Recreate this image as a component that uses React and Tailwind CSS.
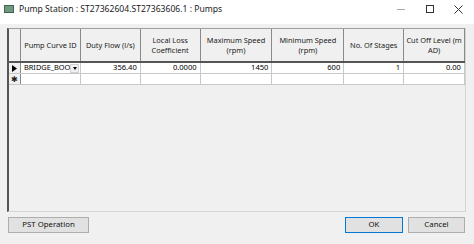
import React from 'react';

const cols = [
  { label: 'Pump Curve ID', w: 'w-[60px]' },
  { label: 'Duty Flow (l/s)', w: 'w-[60px]' },
  { label: 'Local Loss\nCoefficient', w: 'w-[60px]' },
  { label: 'Maximum Speed\n(rpm)', w: 'w-[72px]' },
  { label: 'Minimum Speed\n(rpm)', w: 'w-[72px]' },
  { label: 'No. Of Stages', w: 'w-[60px]' },
  { label: 'Cut Off Level (m\nAD)', w: 'w-[61px]' },
];

const values = ['356.40', '0.0000', '1450', '600', '1', '0.00'];

export default function App() {
  return (
    <div className="w-[474px] h-[244px] bg-[#f0f0f0] flex flex-col overflow-hidden text-black" style={{ fontFamily: '"Noto Sans", "Open Sans", sans-serif' }}>
      {/* title bar */}
      <div className="h-[24px] bg-white flex items-start shrink-0">
        <div className="mt-[5px] ml-[4px] w-[10px] h-[8px] bg-[#6f9a80] border border-[#3d6650]"></div>
        <span className="mt-[3px] ml-[5px] text-[8.6px] leading-[12px] text-[#1a1a1a]">
          Pump Station : ST27362604.ST27363606.1 : Pumps
        </span>
        <div className="ml-auto mr-[1px] flex items-center h-[18px] text-[#333]">
          <div className="w-[29px] h-full flex items-center justify-center">
            <div className="w-[8px] h-px bg-[#aaa]"></div>
          </div>
          <div className="w-[29px] h-full flex items-center justify-center">
            <div className="w-[8px] h-[8px] border border-[#333]"></div>
          </div>
          <div className="w-[29px] h-full flex items-center justify-center">
            <svg width="9" height="9" viewBox="0 0 9 9">
              <path d="M0.5 0.5 L8.5 8.5 M8.5 0.5 L0.5 8.5" stroke="#333" strokeWidth="1" />
            </svg>
          </div>
        </div>
      </div>

      {/* grid */}
      <div className="mt-[4px] ml-[7px] w-[459px] h-[184px] border-l-2 border-l-[#555] border-t border-t-[#a0a0a0] border-r border-r-[#d4d4d4] border-b border-b-[#d4d4d4] shrink-0">
        <div className="flex h-[34px] border-b-2 border-b-[#555]">
          <div className="w-[12px] border-r border-r-[#8a8a8a] bg-[#f0f0f0]"></div>
          {cols.map((c) => (
            <div key={c.label} className={`${c.w} border-r border-r-[#8a8a8a] flex items-center justify-center text-center whitespace-pre-line text-[7.4px] leading-[10px] text-[#222]`}>
              {c.label}
            </div>
          ))}
        </div>
        <div className="flex h-[11px] border-b border-b-[#c8c8c8]">
          <div className="w-[12px] border-r border-r-[#8a8a8a] flex items-center justify-center">
            <svg width="5" height="7" viewBox="0 0 5 7"><path d="M0 0 L5 3.5 L0 7 Z" fill="#000" /></svg>
          </div>
          <div className="w-[60px] bg-white border-r border-r-[#c8c8c8] flex items-center justify-between pl-[3px] text-[7.4px] leading-none">
            <span>BRIDGE_BOO</span>
            <div className="w-[10px] h-[9px] bg-[#f0f0f0] border border-[#d0d0d0] flex items-center justify-center mr-[1px]">
              <svg width="4" height="3" viewBox="0 0 4 3"><path d="M0 0 L4 0 L2 3 Z" fill="#000" /></svg>
            </div>
          </div>
          {values.map((v, i) => (
            <div key={i} className={`${cols[i + 1].w} bg-white border-r border-r-[#c8c8c8] flex items-center justify-end pr-[3px] text-[7.6px] leading-none`}>
              {v}
            </div>
          ))}
        </div>
        <div className="flex h-[11px] border-b border-b-[#c8c8c8]">
          <div className="w-[12px] border-r border-r-[#8a8a8a] flex items-center justify-center text-[8px] leading-none text-[#222]">✱</div>
          {cols.map((c) => (
            <div key={c.label} className={`${c.w} bg-white border-r border-r-[#c8c8c8]`}></div>
          ))}
        </div>
      </div>

      {/* buttons */}
      <div className="mt-[5px] flex items-center h-[16px] shrink-0">
        <button className="ml-[8px] w-[81px] h-[16px] bg-[#e1e1e1] border border-[#adadad] text-[7.8px] leading-none text-[#111]">
          PST Operation
        </button>
        <button className="ml-auto w-[58px] h-[16px] bg-[#e1e1e1] border border-[#0078d7] text-[7.8px] leading-none text-[#111]">
          OK
        </button>
        <button className="ml-[5px] mr-[9px] w-[57px] h-[16px] bg-[#e1e1e1] border border-[#adadad] text-[7.8px] leading-none text-[#111]">
          Cancel
        </button>
      </div>
    </div>
  );
}
